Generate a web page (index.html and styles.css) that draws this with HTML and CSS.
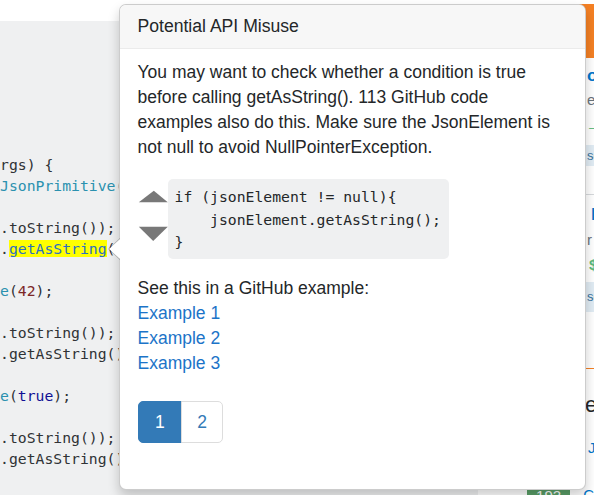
FILE: index.html
```html
<!DOCTYPE html>
<html lang="en">
<head>
<meta charset="utf-8">
<title>Potential API Misuse</title>
<link rel="stylesheet" href="styles.css">
</head>
<body>
<div class="page">
  <main class="main">
    <div class="topbar"></div>
    <pre class="code"><span class="pln">rgs) {</span>
<span class="typ">JsonPrimitive(</span>

<span class="pln">.toString());</span>
<span class="pln">.</span><span class="hl">getAsString</span><span class="pln">(</span>

<span class="typ">e</span><span class="pln">(</span><span class="lit">42</span><span class="pln">);</span>

<span class="pln">.toString());</span>
<span class="pln">.getAsString()</span>

<span class="typ">e</span><span class="pln">(</span><span class="kwd">true</span><span class="pln">);</span>

<span class="pln">.toString());</span>
<span class="pln">.getAsString()</span></pre>
  </main>

  <aside class="sidebar">
    <div class="sb-head"></div>
    <div class="sb-title">or</div>
    <div class="sb-meta">e</div>
    <div class="sb-vote">–</div>
    <div class="sb-tag">sc</div>
    <div class="sb-sep"></div>
    <div class="sb-title sb-title2">l</div>
    <div class="sb-meta sb-meta2">r</div>
    <div class="sb-price">$</div>
    <div class="sb-tag sb-tag2">sc</div>
    <div class="sb-rule"></div>
    <div class="sb-heading">e</div>
    <div class="sb-link">J</div>
    <div class="sb-bottom">
      <span class="sb-badge">192</span>
      <span class="sb-link2">C</span>
    </div>
  </aside>

  <div class="popover">
    <div class="popover-title">Potential API Misuse</div>
    <div class="popover-content">
      <p class="msg">You may want to check whether a condition is true before calling getAsString(). 113 GitHub code examples also do this. Make sure the JsonElement is not null to avoid NullPointerException.</p>
      <div class="fix">
        <svg class="fix-nav" width="30" height="80" viewBox="0 0 30 80" aria-hidden="true">
          <polygon points="0.8,23.3 15.8,11.7 29.8,23.3" fill="#787878"/>
          <polygon points="0.8,47.7 29.8,47.7 15.2,62" fill="#787878"/>
        </svg>
        <pre class="fix-code">if (jsonElement != null){
    jsonElement.getAsString();
}</pre>
      </div>
      <p class="see">See this in a GitHub example:</p>
      <a class="ex" href="#">Example 1</a>
      <a class="ex" href="#">Example 2</a>
      <a class="ex" href="#">Example 3</a>
      <ul class="pagination">
        <li class="page-item active"><span>1</span></li>
        <li class="page-item"><a href="#">2</a></li>
      </ul>
    </div>
  </div>
</div>
</body>
</html>
```
FILE: styles.css
```css
html, body {
  margin: 0;
  padding: 0;
  overflow: hidden;
  background: #fff;
}

body {
  font-family: "Liberation Sans", Arial, sans-serif;
  color: #242729;
}

.page {
  position: relative;
  display: grid;
  grid-template-columns: 527px 67px;
  width: 594px;
  height: 495px;
  overflow: hidden;
}

/* ---------- left code column ---------- */
.main {
  display: flex;
  flex-direction: column;
}

.topbar {
  height: 21px;
  background: #fff;
}

.code {
  flex: 1;
  width: 478px;
  margin: 0;
  padding: 132.5px 0 0 0;
  background: #eff0f1;
  font-family: "DejaVu Sans Mono", monospace;
  font-size: 14.75px;
  line-height: 21px;
  color: #303336;
  white-space: pre;
  overflow: hidden;
}

.pln { color: #303336; }
.typ { color: #2b91af; }
.lit { color: #7d2727; }
.kwd { color: #101094; }
.hl {
  background: #ffff00;
  color: #2b6fc4;
}

/* ---------- right sidebar ---------- */
.sidebar {
  padding-top: 4px;
  overflow: hidden;
  white-space: nowrap;
}

.sb-head {
  height: 54px;
  background: #f48024;
}

.sb-title {
  margin-top: 6px;
  height: 24px;
  line-height: 24px;
  padding-left: 60px;
  font-size: 17px;
  font-weight: bold;
  color: #0077cc;
}

.sb-meta {
  height: 24px;
  line-height: 24px;
  padding-left: 60px;
  font-size: 15px;
  color: #6a737c;
}

.sb-vote {
  margin-top: 4px;
  height: 24px;
  line-height: 24px;
  padding-left: 62px;
  font-size: 13px;
  color: #5eba7d;
}

.sb-tag {
  margin-top: 5px;
  margin-left: 40px;
  height: 21px;
  line-height: 21px;
  padding-left: 20px;
  background: #e1ecf4;
  color: #39739d;
  font-size: 13px;
}

.sb-sep {
  margin-top: 28px;
  border-top: 1px solid #d6d9dc;
}

.sb-title2 {
  margin-top: 8px;
  padding-left: 64px;
}

.sb-meta2 {
  margin-top: 1px;
}

.sb-price {
  margin-top: 1px;
  height: 24px;
  line-height: 24px;
  padding-left: 62px;
  font-size: 15px;
  font-weight: bold;
  color: #5eba7d;
}

.sb-tag2 {
  height: 30px;
  line-height: 30px;
}

.sb-rule {
  margin-top: 56px;
  height: 1px;
  background: #f48024;
}

.sb-heading {
  margin-top: 24px;
  height: 24px;
  line-height: 24px;
  padding-left: 58px;
  font-size: 22px;
  color: #242729;
}

.sb-link {
  margin-top: 19px;
  height: 24px;
  line-height: 24px;
  padding-left: 61px;
  font-size: 15px;
  color: #0077cc;
}

.sb-bottom {
  margin-top: 26px;
  display: flex;
  align-items: flex-start;
}

.sb-badge {
  width: 48px;
  height: 30px;
  line-height: 20px;
  background: #5a9f68;
  color: #fff;
  text-align: center;
  font-size: 15px;
}

.sb-link2 {
  margin-left: 13px;
  font-size: 15px;
  line-height: 18px;
  color: #0077cc;
}

/* ---------- popover ---------- */
.popover {
  position: absolute;
  left: 119px;
  top: 4px;
  width: 467px;
  height: 486px;
  box-sizing: border-box;
  background: #fff;
  border: 1px solid rgba(0, 0, 0, 0.2);
  border-radius: 7px;
  box-shadow: 0 6px 12px rgba(0, 0, 0, 0.2);
  font-size: 17.5px;
  line-height: 25px;
  color: #242729;
}

.popover::before,
.popover::after {
  content: "";
  position: absolute;
  width: 0;
  height: 0;
  border-style: solid;
  border-color: transparent;
}

.popover::before {
  left: -12px;
  top: 233px;
  border-width: 11px 12px 11px 0;
  border-right-color: rgba(0, 0, 0, 0.25);
}

.popover::after {
  left: -11px;
  top: 234px;
  border-width: 10px 11px 10px 0;
  border-right-color: #fff;
}

.popover-title {
  height: 43px;
  line-height: 43px;
  padding: 0 17.5px;
  background: #f7f7f7;
  border-bottom: 1px solid #ebebeb;
  border-radius: 6px 6px 0 0;
  font-size: 17.6px;
}

.popover-content {
  padding: 11.25px 17.5px;
}

.msg {
  margin: 0;
}

.fix {
  display: flex;
  align-items: flex-start;
  margin-top: 19px;
}

.fix-nav {
  display: block;
  flex: none;
}

.fix-code {
  margin: 0;
  padding: 7px 8px 5.5px 7px;
  background: #eff0f1;
  border-radius: 5px;
  font-family: "DejaVu Sans Mono", monospace;
  font-size: 14.75px;
  line-height: 22.5px;
  color: #242729;
}

.see {
  margin: 17px 0 0;
}

.ex {
  display: block;
  color: #1c74c8;
  text-decoration: none;
}

.pagination {
  display: flex;
  margin: 25px 0 0;
  padding: 0;
  list-style: none;
}

.page-item > span,
.page-item > a {
  display: block;
  padding: 7.5px 15px;
  line-height: 25px;
  border: 1px solid #ddd;
  color: #337ab7;
  text-decoration: none;
  background: #fff;
}

.page-item + .page-item > a {
  margin-left: -1px;
  border-radius: 0 5px 5px 0;
}

.page-item.active > span {
  padding: 7.5px 16.5px;
  background: #337ab7;
  border-color: #337ab7;
  color: #fff;
  border-radius: 5px 0 0 5px;
}
```
